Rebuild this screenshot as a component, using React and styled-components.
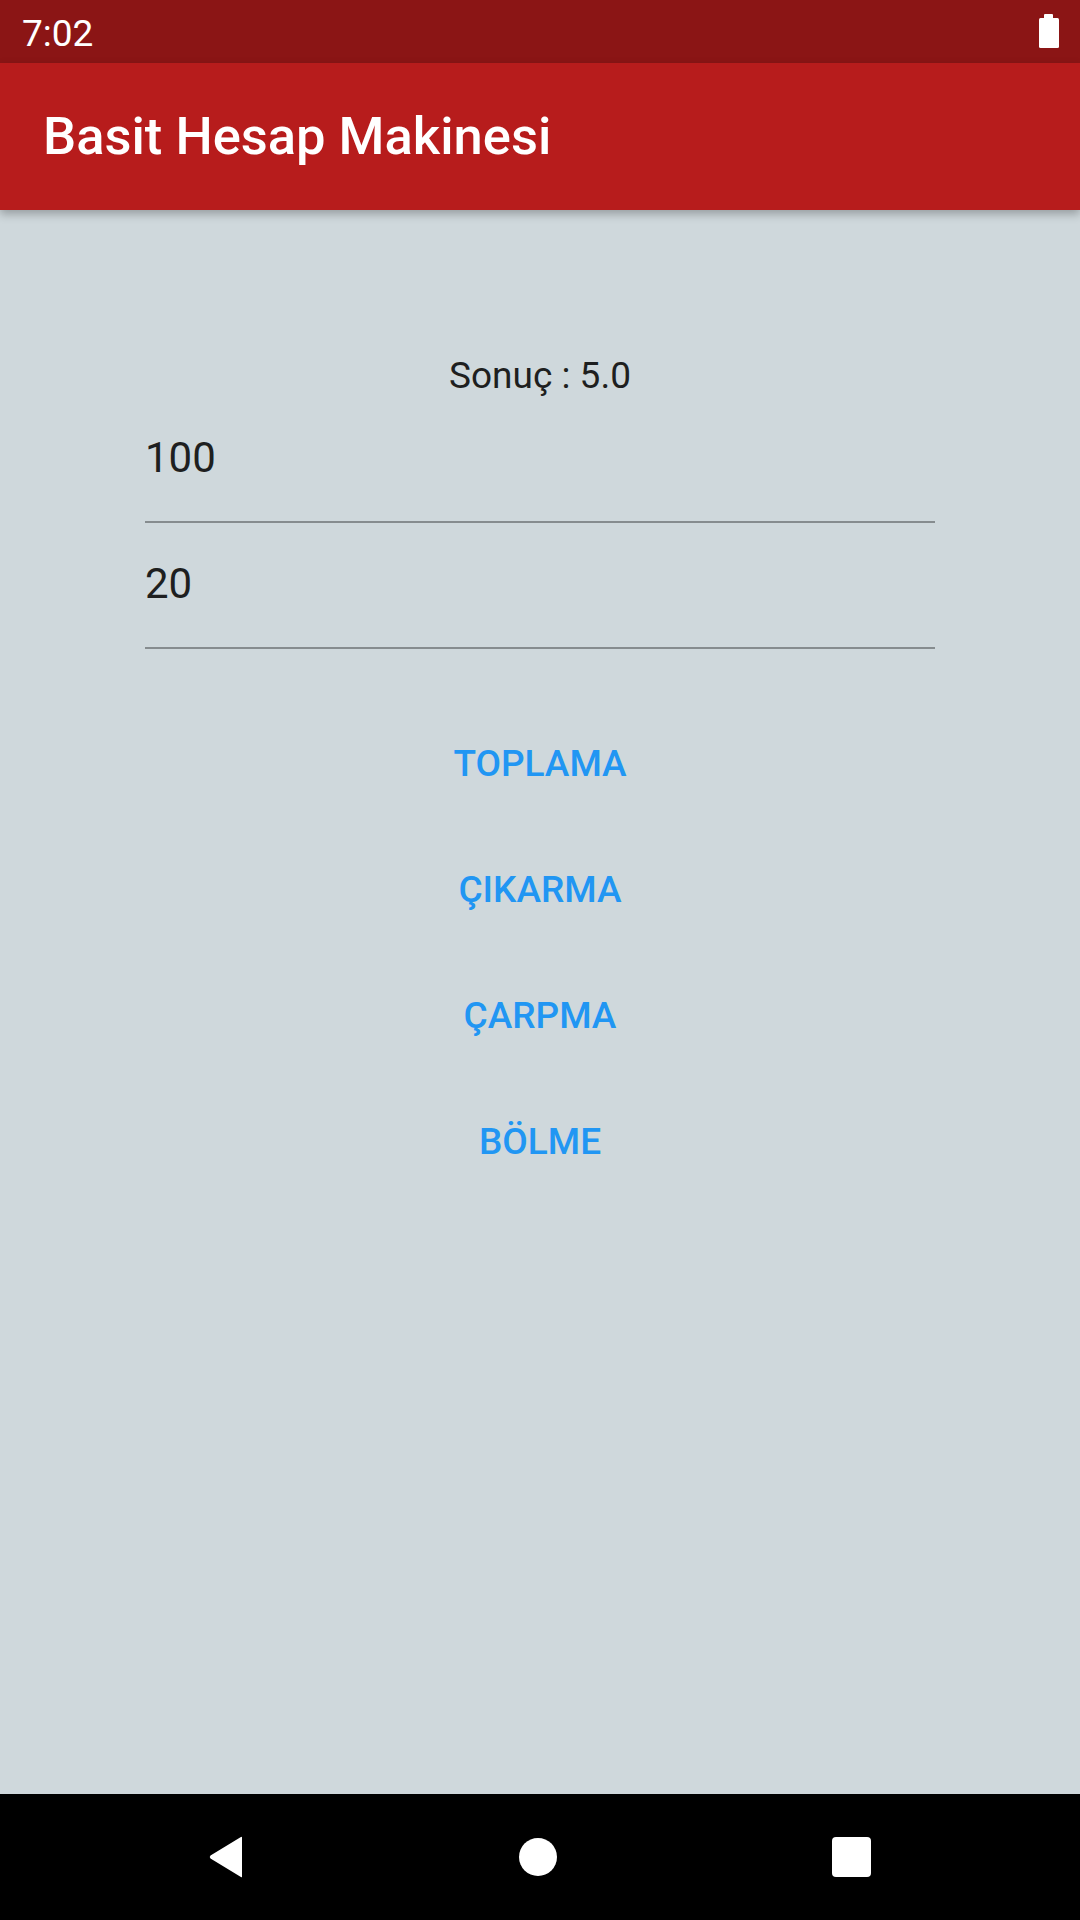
import React from "react";
import styled, { createGlobalStyle } from "styled-components";

const Global = createGlobalStyle`
  html, body { margin: 0; padding: 0; }
  body { font-family: Roboto, "Noto Sans", sans-serif; background: #CFD8DC; }
  * { box-sizing: border-box; }
`;

const Screen = styled.div`
  width: 1080px;
  height: 1920px;
  display: flex;
  flex-direction: column;
  background: #CFD8DC;
  overflow: hidden;
`;

const StatusBar = styled.div`
  height: 63px;
  flex: none;
  background: #8B1515;
  display: flex;
  justify-content: space-between;
  align-items: flex-start;
  padding: 0 21px 0 22px;
`;

const Clock = styled.span`
  font-family: Roboto, sans-serif;
  font-size: 37px;
  line-height: 59px;
  padding-top: 4px;
  color: #ffffff;
`;

const Battery = styled.svg`
  margin-top: 14px;
  display: block;
`;

const AppBar = styled.header`
  height: 147px;
  flex: none;
  background: #B71C1C;
  padding-left: 43px;
  position: relative;
  z-index: 2;
  box-shadow: 0 4px 9px rgba(0, 0, 0, 0.28);
`;

const Title = styled.h1`
  margin: 0;
  font-family: Roboto, sans-serif;
  font-weight: 500;
  font-size: 52.5px;
  line-height: 147px;
  color: #ffffff;
`;

const Main = styled.main`
  flex: 1;
  display: flex;
  flex-direction: column;
  align-items: center;
  padding-top: 146px;
`;

const Result = styled.div`
  font-family: Roboto, sans-serif;
  font-size: 37px;
  line-height: 40px;
  color: #1e1f20;
`;

const Fields = styled.div`
  width: 790px;
  margin-top: 1px;
  display: flex;
  flex-direction: column;
`;

const Field = styled.div`
  padding: 36px 0 38px;
  font-family: Roboto, sans-serif;
  font-size: 42px;
  line-height: 50px;
  color: #1e1f20;
  border-bottom: 2px solid #868C8F;
`;

const Buttons = styled.div`
  margin-top: 52px;
  display: flex;
  flex-direction: column;
  align-items: center;
`;

const TextButton = styled.button`
  height: 126px;
  line-height: 126px;
  padding: 0 24px;
  border: none;
  background: transparent;
  font-family: Roboto, sans-serif;
  font-weight: 500;
  font-size: 37px;
  color: #2196F3;
  cursor: pointer;
`;

const NavBar = styled.nav`
  height: 126px;
  flex: none;
  background: #000000;
  display: flex;
  justify-content: center;
  align-items: center;
  gap: 275px;
`;

const HomeDot = styled.div`
  width: 38px;
  height: 38px;
  border-radius: 50%;
  background: #ffffff;
`;

const Recents = styled.div`
  width: 39px;
  height: 40px;
  border-radius: 4px;
  background: #ffffff;
`;

export default function App() {
  const ops = ["TOPLAMA", "ÇIKARMA", "ÇARPMA", "BÖLME"];
  return (
    <Screen>
      <Global />
      <StatusBar>
        <Clock>7:02</Clock>
        <Battery width="20" height="34" viewBox="0 0 20 34">
          <rect x="5" y="0" width="9" height="5" rx="1" fill="#fff" />
          <rect x="0" y="4" width="20" height="30" rx="1.5" fill="#fff" />
        </Battery>
      </StatusBar>
      <AppBar>
        <Title>Basit Hesap Makinesi</Title>
      </AppBar>
      <Main>
        <Result>Sonuç : 5.0</Result>
        <Fields>
          <Field>100</Field>
          <Field>20</Field>
        </Fields>
        <Buttons>
          {ops.map((o) => (
            <TextButton key={o}>{o}</TextButton>
          ))}
        </Buttons>
      </Main>
      <NavBar>
        <svg width="35" height="42" viewBox="0 0 35 42">
          <path d="M33 1.5 L33 40.5 Q33 42 31.5 40.8 L1.5 22.5 Q0 21 1.5 19.5 L31.5 1.2 Q33 0 33 1.5 Z" fill="#fff" />
        </svg>
        <HomeDot />
        <Recents />
      </NavBar>
    </Screen>
  );
}
